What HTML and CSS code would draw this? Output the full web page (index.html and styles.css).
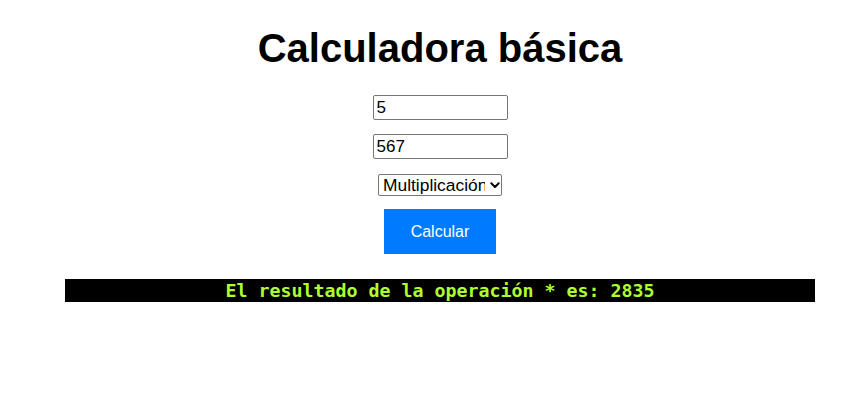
FILE: index.html
```html
<!DOCTYPE html>
<html lang="es">
<head>
<meta charset="utf-8">
<title>Calculadora básica</title>
<link rel="stylesheet" href="styles.css">
</head>
<body>
<main class="page">
  <h1 class="title">Calculadora básica</h1>
  <input class="num num-first" type="text" value="5">
  <input class="num num-second" type="text" value="567">
  <span class="op-wrap">
    <select class="op">
      <option>Suma</option>
      <option>Resta</option>
      <option selected>Multiplicación</option>
      <option>División</option>
    </select>
    <svg class="op-arrow" width="10" height="7" viewBox="0 0 10 7" aria-hidden="true">
      <path d="M1.3 1.3 L5 5 L8.7 1.3" fill="none" stroke="#000" stroke-width="2" stroke-linecap="round" stroke-linejoin="round"/>
    </svg>
  </span>
  <button class="calc" type="button">Calcular</button>
  <div class="result">El resultado de la operación * es: 2835</div>
</main>
</body>
</html>
```
FILE: styles.css
```css
html, body {
  margin: 0;
  padding: 0;
  background: #ffffff;
}

.page {
  display: flex;
  flex-direction: column;
  align-items: center;
  padding-left: 13px;
  font-family: "Liberation Sans", Arial, sans-serif;
}

.title {
  margin: 25px 0 24px;
  font-size: 40px;
  font-weight: bold;
  line-height: 46px;
  color: #000000;
}

.num {
  box-sizing: border-box;
  width: 135px;
  height: 25px;
  margin: 0;
  padding: 0 3px;
  border: 1px solid #767676;
  border-radius: 2px;
  font-family: "Liberation Sans", Arial, sans-serif;
  font-size: 17px;
  color: #000000;
  background: #ffffff;
}

.num-second {
  margin-top: 14px;
}

.op-wrap {
  position: relative;
  display: block;
  margin-top: 15px;
  width: 124px;
  height: 22px;
}

.op {
  -webkit-appearance: none;
  appearance: none;
  box-sizing: border-box;
  display: block;
  width: 124px;
  height: 22px;
  margin: 0;
  padding: 0 16px 0 4px;
  border: 1px solid #767676;
  border-radius: 2px;
  background: #ffffff;
  font-family: "Liberation Sans", Arial, sans-serif;
  font-size: 17.4px;
  line-height: 20px;
  color: #000000;
}

.op-arrow {
  position: absolute;
  right: 2px;
  top: 8px;
  pointer-events: none;
}

.calc {
  box-sizing: border-box;
  width: 112px;
  height: 45px;
  margin-top: 13px;
  padding: 0;
  border: none;
  background: #007bff;
  color: #ffffff;
  font-family: "Liberation Sans", Arial, sans-serif;
  font-size: 16px;
}

.result {
  box-sizing: border-box;
  width: 750px;
  height: 23px;
  margin-top: 25px;
  background: #000000;
  color: #adff2f;
  font-family: "DejaVu Sans Mono", "Liberation Mono", monospace;
  font-weight: bold;
  font-size: 18.27px;
  line-height: 23px;
  text-align: center;
  white-space: pre;
}
```
